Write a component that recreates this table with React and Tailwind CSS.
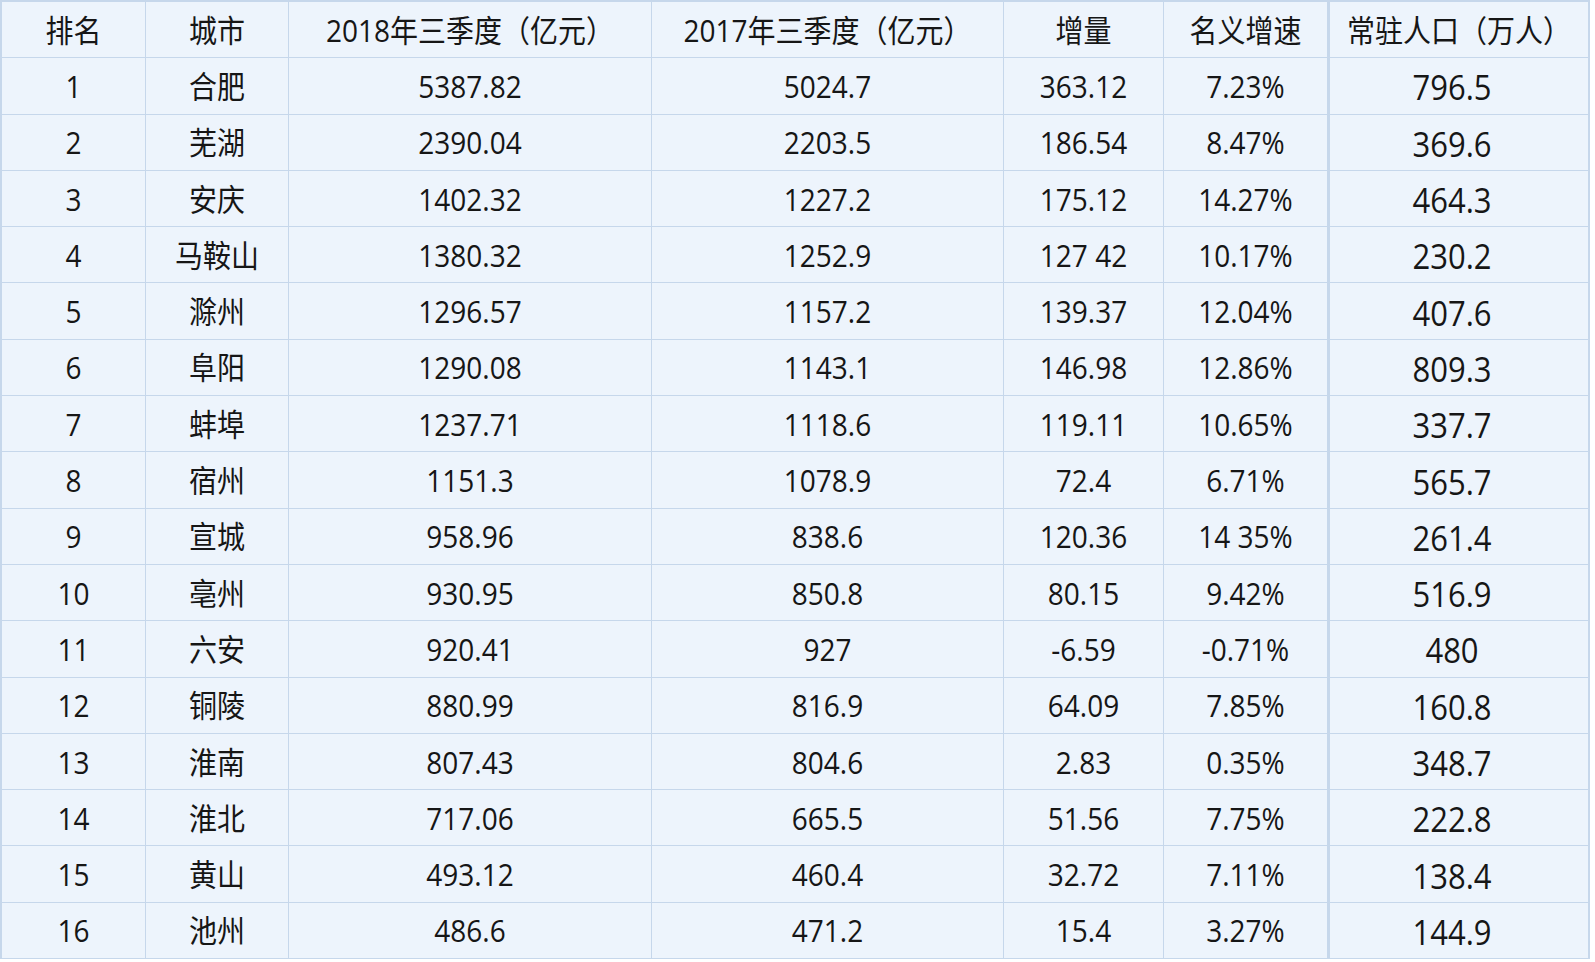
import React from "react";

const headers = ["排名", "城市", "2018年三季度（亿元）", "2017年三季度（亿元）", "增量", "名义增速", "常驻人口（万人）"];

const rows = [
  ["1", "合肥", "5387.82", "5024.7", "363.12", "7.23%", "796.5"],
  ["2", "芜湖", "2390.04", "2203.5", "186.54", "8.47%", "369.6"],
  ["3", "安庆", "1402.32", "1227.2", "175.12", "14.27%", "464.3"],
  ["4", "马鞍山", "1380.32", "1252.9", "127 42", "10.17%", "230.2"],
  ["5", "滁州", "1296.57", "1157.2", "139.37", "12.04%", "407.6"],
  ["6", "阜阳", "1290.08", "1143.1", "146.98", "12.86%", "809.3"],
  ["7", "蚌埠", "1237.71", "1118.6", "119.11", "10.65%", "337.7"],
  ["8", "宿州", "1151.3", "1078.9", "72.4", "6.71%", "565.7"],
  ["9", "宣城", "958.96", "838.6", "120.36", "14 35%", "261.4"],
  ["10", "亳州", "930.95", "850.8", "80.15", "9.42%", "516.9"],
  ["11", "六安", "920.41", "927", "-6.59", "-0.71%", "480"],
  ["12", "铜陵", "880.99", "816.9", "64.09", "7.85%", "160.8"],
  ["13", "淮南", "807.43", "804.6", "2.83", "0.35%", "348.7"],
  ["14", "淮北", "717.06", "665.5", "51.56", "7.75%", "222.8"],
  ["15", "黄山", "493.12", "460.4", "32.72", "7.11%", "138.4"],
  ["16", "池州", "486.6", "471.2", "15.4", "3.27%", "144.9"],
];

function Row({ cells, header }) {
  return (
    <div className="grid grid-cols-[143px_143px_363px_352px_160px_164px_261px] h-[56.3px]">
      {cells.map((c, i) => {
        let cls = "flex items-center justify-center border-[#c6d7eb] border-b ";
        if (i === 6) cls += "border-l-[3px] ";
        else if (i > 0) cls += "border-l ";
        if (i === 6 && !header) cls += "text-[31px] pr-[14px] pt-[4px] ";
        return (
          <div key={i} className={cls}>
            <span className="inline-block scale-y-110">{c}</span>
          </div>
        );
      })}
    </div>
  );
}

export default function App() {
  return (
    <div className="min-h-screen bg-white">
      <div
        className="w-[1590px] border-2 border-[#c6d7eb] border-b-0 bg-[#edf4fc] text-[28px] text-[#161616] leading-none"
        style={{ fontFamily: '"Open Sans", "Noto Sans CJK SC", sans-serif' }}
      >
        <Row cells={headers} header />
        {rows.map((r) => (
          <Row key={r[0]} cells={r} />
        ))}
      </div>
    </div>
  );
}
